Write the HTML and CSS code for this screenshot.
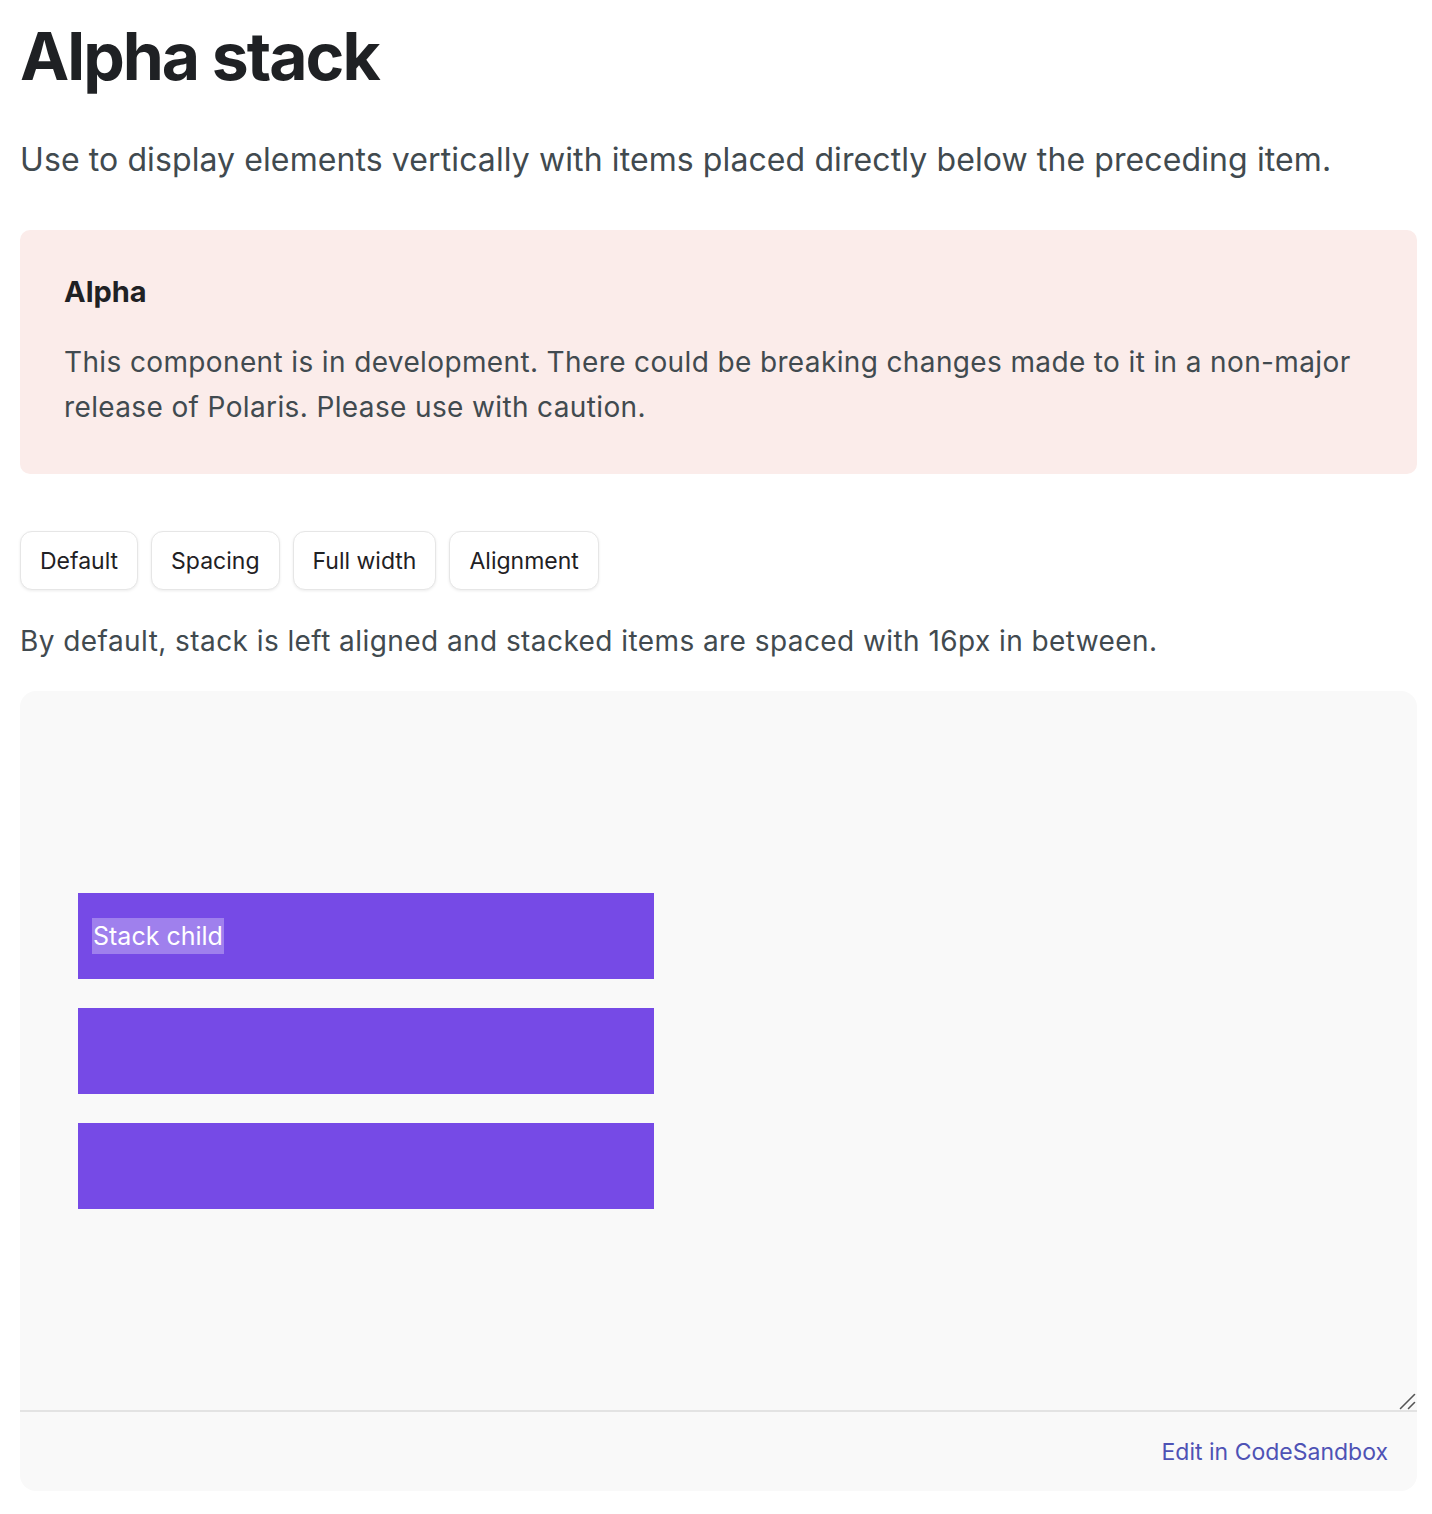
FILE: index.html
```html
<!DOCTYPE html>
<html lang="en">
<head>
<meta charset="utf-8">
<title>Alpha stack</title>
<link rel="stylesheet" href="styles.css">
</head>
<body>
<main class="page">
  <h1 class="title">Alpha stack</h1>
  <p class="lead">Use to display elements vertically with items placed directly below the preceding item.</p>
  <section class="notice">
    <h2 class="notice-title">Alpha</h2>
    <p class="notice-text">This component is in development. There could be breaking changes made to it in a non-major release of Polaris. Please use with caution.</p>
  </section>
  <nav class="tabs">
    <button class="tab">Default</button>
    <button class="tab">Spacing</button>
    <button class="tab">Full width</button>
    <button class="tab">Alignment</button>
  </nav>
  <p class="desc">By default, stack is left aligned and stacked items are spaced with 16px in between.</p>
  <section class="example">
    <div class="preview">
      <div class="stack">
        <div class="child"><span class="child-label">Stack child</span></div>
        <div class="child"></div>
        <div class="child"></div>
      </div>
      <svg class="resizer" width="18" height="18" viewBox="0 0 18 18" aria-hidden="true">
        <path d="M2.5 16.5 L16.5 2.5" stroke="#555" stroke-width="1.6" stroke-linecap="round"/>
        <path d="M10.5 16.5 L16.5 10.5" stroke="#555" stroke-width="1.6" stroke-linecap="round"/>
      </svg>
    </div>
    <div class="example-footer">
      <a class="sandbox-link" href="#">Edit in CodeSandbox</a>
    </div>
  </section>
</main>
</body>
</html>
```
FILE: styles.css
```css
* { box-sizing: border-box; }
html, body { margin: 0; padding: 0; background: #ffffff; }
body {
  font-family: Inter, "Noto Sans", sans-serif;
  color: #1f2124;
}
.page {
  padding: 16px 15px 20px 20px;
}
.title {
  margin: 0;
  font-size: 66px;
  line-height: 80px;
  font-weight: 700;
  letter-spacing: -2px;
  color: #1f2124;
}
.lead {
  margin: 42px 0 0 0;
  font-size: 32px;
  line-height: 44px;
  color: #414a4f;
  letter-spacing: 0.1px;
}
.notice {
  margin-top: 48px;
  background: #fbecea;
  border-radius: 10px;
  padding: 40px 44px 44px 44px;
}
.notice-title {
  margin: 0;
  font-size: 29px;
  line-height: 44px;
  font-weight: 700;
  color: #1f2124;
}
.notice-text {
  margin: 26px 0 0 0;
  font-size: 28px;
  line-height: 45px;
  color: #414a4f;
  letter-spacing: 0.37px;
}
.tabs {
  display: flex;
  gap: 13px;
  margin-top: 57px;
}
.tab {
  font-family: inherit;
  font-size: 23px;
  color: #1f2124;
  background: #ffffff;
  border: 1px solid #e6e6e6;
  border-radius: 12px;
  box-shadow: 0 1px 3px rgba(0, 0, 0, 0.08);
  height: 59px;
  padding: 0 19px;
  cursor: pointer;
}
.desc {
  margin: 31px 0 0 0;
  font-size: 28px;
  line-height: 40px;
  color: #414a4f;
  letter-spacing: 0.43px;
}
.example {
  margin-top: 30px;
  background: #f9f9f9;
  border-radius: 16px;
  overflow: hidden;
}
.preview {
  position: relative;
  height: 721px;
  border-bottom: 2px solid #e3e3e3;
  display: flex;
  align-items: center;
  padding-left: 58px;
}
.resizer {
  position: absolute;
  right: 1px;
  bottom: 0px;
}
.stack {
  display: flex;
  flex-direction: column;
  gap: 29px;
  width: 576px;
}
.child {
  background: #764ae6;
  height: 86px;
  padding: 25px 14px;
  display: flex;
  align-items: center;
}
.child-label {
  background: rgba(255, 255, 255, 0.3);
  color: #ffffff;
  font-size: 25px;
  line-height: 36px;
  padding: 0 1px;
}
.example-footer {
  height: 79px;
  display: flex;
  align-items: center;
  justify-content: flex-end;
  padding-right: 29px;
}
.sandbox-link {
  font-size: 23px;
  color: #4e52b5;
  text-decoration: none;
}
```
